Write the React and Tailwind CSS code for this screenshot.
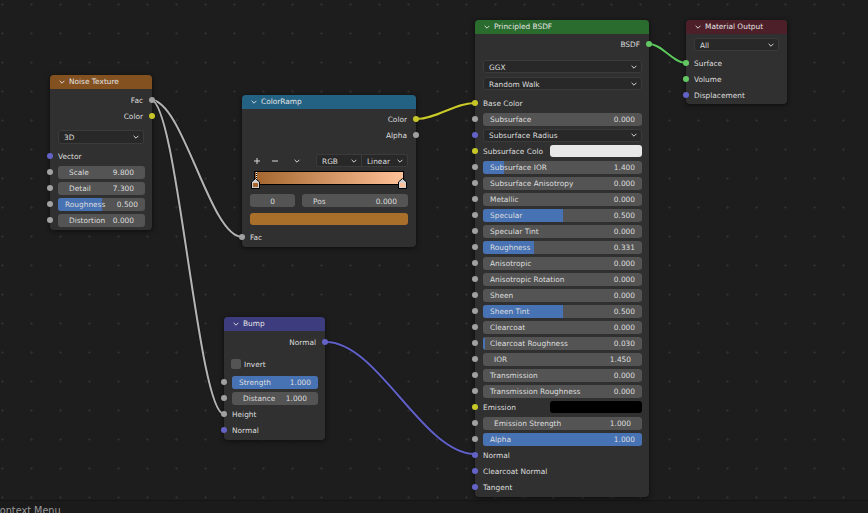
const SOCK = {
  f: 'bg-[#a1a1a1]',
  c: 'bg-[#c7c729]',
  v: 'bg-[#6363c7]',
  s: 'bg-[#63c763]',
};

function Chev() {
  return (
    <svg width="6" height="4" viewBox="0 0 6 4" className="shrink-0">
      <path d="M0.6 0.8 L3 3.2 L5.4 0.8" fill="none" stroke="#d6d6d6" strokeWidth="1" />
    </svg>
  );
}

function Sock({ t, right }) {
  return (
    <span
      className={`absolute top-1/2 -mt-[3px] w-[6px] h-[6px] rounded-full ${right ? '-right-[3px]' : '-left-[3px]'} ${SOCK[t]}`}
    />
  );
}

function Node({ pos, head, title, children }) {
  return (
    <div className={`absolute rounded-[4px] bg-[#303030] shadow-[0_1px_5px_rgba(0,0,0,0.6)] ${pos}`}>
      <div className={`h-[14px] rounded-t-[4px] flex items-center pl-[9px] ${head}`}>
        <Chev />
        <span className="ml-[4px] text-[#e4e4e4]">{title}</span>
      </div>
      {children}
    </div>
  );
}

function Out({ label, t }) {
  return (
    <div className="relative h-[16px] flex items-center justify-end pr-[9px]">
      <span className="translate-y-px">{label}</span>
      <Sock t={t} right />
    </div>
  );
}

function In({ label, t }) {
  return (
    <div className="relative h-[16px] flex items-center pl-[8px]">
      <span className="translate-y-px">{label}</span>
      <Sock t={t} />
    </div>
  );
}

function Slider({ label, value, fill = 0, t = 'f', num }) {
  return (
    <div className="relative h-[16px] flex items-center pl-[8px] pr-[7px]">
      <Sock t={t} />
      <div
        className={`relative flex-1 h-[13px] rounded-[3px] bg-[#545454] overflow-hidden flex items-center justify-between ${num ? 'px-[11px]' : 'px-[7px]'}`}
      >
        {fill > 0 && <div className="absolute left-0 top-0 bottom-0 bg-[#4772b3]" style={{ width: `${fill * 100}%` }} />}
        <span className="relative translate-y-px whitespace-nowrap">{label}</span>
        <span className="relative translate-y-px">{value}</span>
      </div>
    </div>
  );
}

function Drop({ label, cls = 'h-[13px]' }) {
  return (
    <div className={`rounded-[3px] bg-[#282828] border border-[#3b3b3b] flex items-center justify-between pl-[5px] pr-[4px] ${cls}`}>
      <span className="translate-y-px">{label}</span>
      <Chev />
    </div>
  );
}

function ColorRow({ label, t, color }) {
  return (
    <div className="relative h-[16px] flex items-center pl-[8px] pr-[7px]">
      <Sock t={t} />
      <span className="w-[67px] translate-y-px whitespace-nowrap">{label}</span>
      <span className={`flex-1 h-[12px] rounded-[3px] ${color}`} />
    </div>
  );
}

function Marker({ fill, cls }) {
  return (
    <svg width="9" height="11" viewBox="0 0 9 11" className={`absolute ${cls}`}>
      <path d="M0.5 10.5 V4 L4.5 0.5 L8.5 4 V10.5 Z" fill="#cfcfcf" stroke="#000" strokeWidth="1" />
      <rect x="2" y="5" width="5" height="4" fill={fill} />
    </svg>
  );
}

const links = [
  { d: 'M151 100 C183 100, 210 237, 242 237', c: '#b4b4b4' },
  { d: 'M151 100 C177 100, 198 414, 224 414', c: '#b4b4b4' },
  { d: 'M416 119 C437 119, 454 103, 475 103', c: '#c9c92c' },
  { d: 'M326 342 C378 342, 423 454, 475 454', c: '#5f5fc6' },
  { d: 'M649 44 C662 44, 673 63, 686 63', c: '#5cc45c' },
];

export default function App() {
  return (
    <div className="w-[868px] h-[513px] overflow-hidden flex flex-col bg-[#1d1d1d] font-['DejaVu_Sans',sans-serif] text-[7.4px] leading-none text-[#dedede]">
      <div className="relative flex-1 bg-[radial-gradient(circle,#2d2d2d_1px,transparent_1.4px)] bg-[length:29px_29px] bg-[position:-12px_-10px]">
        <svg className="absolute inset-0" width="868" height="500">
          {links.map((l, i) => (
            <g key={i} fill="none">
              <path d={l.d} stroke="#141414" strokeOpacity="0.7" strokeWidth="3.5" />
              <path d={l.d} stroke={l.c} strokeWidth="2" />
            </g>
          ))}
        </svg>

        <Node pos="left-[50px] top-[75px] w-[102px]" head="bg-[#83501f]" title="Noise Texture">
          <div className="pt-[3px] pb-[2px]">
            <Out label="Fac" t="f" />
            <Out label="Color" t="c" />
            <div className="mt-[6px] mb-[4px] pl-[8px] pr-[8px]">
              <Drop label="3D" cls="h-[14px]" />
            </div>
            <In label="Vector" t="v" />
            <Slider label="Scale" value="9.800" num />
            <Slider label="Detail" value="7.300" num />
            <Slider label="Roughness" value="0.500" fill={0.5} />
            <Slider label="Distortion" value="0.000" num />
          </div>
        </Node>

        <Node pos="left-[242px] top-[95px] w-[174px]" head="bg-[#246283]" title="ColorRamp">
          <div className="pt-[2px] pb-[2px]">
            <Out label="Color" t="c" />
            <Out label="Alpha" t="f" />
            <div className="mt-[11px] h-[13px] flex items-center pl-[9px] pr-[8px]">
              <span className="w-[12px] flex justify-center">
                <svg width="6" height="6" viewBox="0 0 6 6">
                  <path d="M3 0 V6 M0 3 H6" stroke="#d8d8d8" strokeWidth="1" />
                </svg>
              </span>
              <span className="w-[12px] ml-[6px] flex justify-center">
                <svg width="6" height="6" viewBox="0 0 6 6">
                  <path d="M0 3 H6" stroke="#d8d8d8" strokeWidth="1" />
                </svg>
              </span>
              <span className="w-[12px] ml-[10px] flex justify-center">
                <Chev />
              </span>
              <div className="ml-auto flex h-[13px]">
                <div className="w-[46px] rounded-l-[3px] bg-[#282828] border border-[#3b3b3b] flex items-center justify-between pl-[5px] pr-[4px]">
                  <span className="translate-y-px">RGB</span>
                  <Chev />
                </div>
                <div className="w-[46px] rounded-r-[3px] bg-[#282828] border border-l-0 border-[#3b3b3b] flex items-center justify-between pl-[5px] pr-[4px]">
                  <span className="translate-y-px">Linear</span>
                  <Chev />
                </div>
              </div>
            </div>
            <div className="relative mt-[4px] mx-[12px] h-[14px] border border-black bg-[linear-gradient(to_right,#a5672f,#ffc197)]">
              <span className="absolute left-[1px] top-0 h-[7px] w-px bg-[repeating-linear-gradient(to_bottom,#fff_0_1px,#000_1px_2px)]" />
              <Marker fill="#a5672f" cls="left-[-4px] top-[6px]" />
              <Marker fill="#ffc197" cls="right-[-4px] top-[6px]" />
            </div>
            <div className="mt-[9px] flex gap-[7px] px-[8px]">
              <div className="w-[45px] h-[13px] rounded-[3px] bg-[#545454] flex items-center justify-center">
                <span className="translate-y-px">0</span>
              </div>
              <div className="flex-1 h-[13px] rounded-[3px] bg-[#545454] flex items-center justify-between px-[11px]">
                <span className="translate-y-px">Pos</span>
                <span className="translate-y-px">0.000</span>
              </div>
            </div>
            <div className="mt-[6px] mx-[8px] h-[12px] rounded-[3px] bg-[#a86f2b]" />
            <div className="mt-[4px]">
              <In label="Fac" t="f" />
            </div>
          </div>
        </Node>

        <Node pos="left-[224px] top-[317px] w-[101px]" head="bg-[#3c3c7f]" title="Bump">
          <div className="pt-[3px] pb-[2px]">
            <Out label="Normal" t="v" />
            <div className="mt-[6px] mb-[2px] h-[16px] flex items-center pl-[7px]">
              <span className="w-[10px] h-[10px] rounded-[2px] bg-[#545454]" />
              <span className="ml-[3px] translate-y-px">Invert</span>
            </div>
            <Slider label="Strength" value="1.000" fill={1} />
            <Slider label="Distance" value="1.000" num />
            <In label="Height" t="f" />
            <In label="Normal" t="v" />
          </div>
        </Node>

        <Node pos="left-[475px] top-[20px] w-[174px]" head="bg-[#2a6b2e]" title="Principled BSDF">
          <div className="pt-[2px] pb-[2px]">
            <Out label="BSDF" t="s" />
            <div className="mt-[8px] pl-[8px] pr-[7px]">
              <Drop label="GGX" />
            </div>
            <div className="mt-[4px] mb-[5px] pl-[8px] pr-[7px]">
              <Drop label="Random Walk" />
            </div>
            <In label="Base Color" t="c" />
            <Slider label="Subsurface" value="0.000" />
            <div className="relative h-[16px] flex items-center pl-[8px] pr-[7px]">
              <Sock t="v" />
              <div className="flex-1">
                <Drop label="Subsurface Radius" />
              </div>
            </div>
            <ColorRow label="Subsurface Colo" t="c" color="bg-[#e8e8e8]" />
            <Slider label="Subsurface IOR" value="1.400" fill={0.13} />
            <Slider label="Subsurface Anisotropy" value="0.000" />
            <Slider label="Metallic" value="0.000" />
            <Slider label="Specular" value="0.500" fill={0.5} />
            <Slider label="Specular Tint" value="0.000" />
            <Slider label="Roughness" value="0.331" fill={0.32} />
            <Slider label="Anisotropic" value="0.000" />
            <Slider label="Anisotropic Rotation" value="0.000" />
            <Slider label="Sheen" value="0.000" />
            <Slider label="Sheen Tint" value="0.500" fill={0.5} />
            <Slider label="Clearcoat" value="0.000" />
            <Slider label="Clearcoat Roughness" value="0.030" fill={0.015} />
            <Slider label="IOR" value="1.450" num />
            <Slider label="Transmission" value="0.000" />
            <Slider label="Transmission Roughness" value="0.000" />
            <ColorRow label="Emission" t="c" color="bg-black" />
            <Slider label="Emission Strength" value="1.000" num />
            <Slider label="Alpha" value="1.000" fill={1} />
            <In label="Normal" t="v" />
            <In label="Clearcoat Normal" t="v" />
            <In label="Tangent" t="v" />
          </div>
        </Node>

        <Node pos="left-[686px] top-[20px] w-[101px]" head="bg-[#4d1f28]" title="Material Output">
          <div className="pb-[1px]">
            <div className="mt-[4px] mb-[4px] pl-[8px] pr-[8px]">
              <Drop label="All" />
            </div>
            <In label="Surface" t="s" />
            <In label="Volume" t="s" />
            <In label="Displacement" t="v" />
          </div>
        </Node>
      </div>

      <div className="h-[13px] border-t border-[#151515] bg-[#1b1b1b] overflow-hidden">
        <span className="block -ml-[7px] mt-[5px] text-[9.7px] text-[#9c9c9c] whitespace-nowrap">Context Menu</span>
      </div>
    </div>
  );
}
